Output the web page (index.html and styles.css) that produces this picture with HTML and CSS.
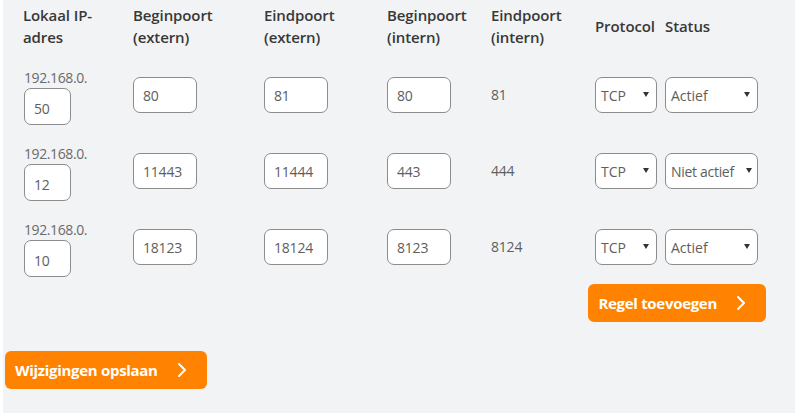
FILE: index.html
```html
<!DOCTYPE html>
<html lang="nl">
<head>
<meta charset="utf-8">
<title>Port forwarding</title>
<link rel="stylesheet" href="styles.css">
</head>
<body>
<div class="panel">
  <div class="rules">
    <div class="th">Lokaal IP-<br>adres</div>
    <div class="th">Beginpoort<br>(extern)</div>
    <div class="th">Eindpoort<br>(extern)</div>
    <div class="th">Beginpoort<br>(intern)</div>
    <div class="th">Eindpoort<br>(intern)</div>
    <div class="th">Protocol</div>
    <div class="th">Status</div>

    <div class="ip"><span class="prefix">192.168.0.</span><span class="field field-ip">50</span></div>
    <div class="cell"><span class="field">80</span></div>
    <div class="cell"><span class="field">81</span></div>
    <div class="cell"><span class="field">80</span></div>
    <div class="cell value">81</div>
    <div class="cell"><span class="select select-proto"><span>TCP</span><span class="arrow"></span></span></div>
    <div class="cell"><span class="select select-status"><span>Actief</span><span class="arrow"></span></span></div>

    <div class="ip"><span class="prefix">192.168.0.</span><span class="field field-ip">12</span></div>
    <div class="cell"><span class="field">11443</span></div>
    <div class="cell"><span class="field">11444</span></div>
    <div class="cell"><span class="field">443</span></div>
    <div class="cell value">444</div>
    <div class="cell"><span class="select select-proto"><span>TCP</span><span class="arrow"></span></span></div>
    <div class="cell"><span class="select select-status tight"><span>Niet actief</span><span class="arrow"></span></span></div>

    <div class="ip"><span class="prefix">192.168.0.</span><span class="field field-ip">10</span></div>
    <div class="cell"><span class="field">18123</span></div>
    <div class="cell"><span class="field">18124</span></div>
    <div class="cell"><span class="field">8123</span></div>
    <div class="cell value">8124</div>
    <div class="cell"><span class="select select-proto"><span>TCP</span><span class="arrow"></span></span></div>
    <div class="cell"><span class="select select-status"><span>Actief</span><span class="arrow"></span></span></div>
  </div>

  <div class="add-row">
    <button class="btn">Regel toevoegen<svg class="chev" width="10" height="16" viewBox="0 0 10 16"><polyline points="2,2 8,8 2,14" fill="none" stroke="#fff" stroke-width="2" stroke-linecap="round" stroke-linejoin="round"/></svg></button>
  </div>

  <div class="save-row">
    <button class="btn">Wijzigingen opslaan<svg class="chev" width="10" height="16" viewBox="0 0 10 16"><polyline points="2,2 8,8 2,14" fill="none" stroke="#fff" stroke-width="2" stroke-linecap="round" stroke-linejoin="round"/></svg></button>
  </div>
</div>
</body>
</html>
```
FILE: styles.css
```css
html, body {
  margin: 0;
  padding: 0;
  background: #ffffff;
}

body {
  font-family: "Open Sans", "Liberation Sans", sans-serif;
  color: #5e5e5e;
}

.panel {
  margin-left: 3px;
  width: 792px;
  height: 413px;
  background: #f2f3f5;
  box-sizing: border-box;
  padding-top: 4px;
}

.rules {
  display: grid;
  grid-template-columns: 110px 131px 123px 104px 104px 70px 100px;
  grid-template-rows: 44px repeat(3, 55px);
  row-gap: 21px;
  align-items: center;
  padding-left: 20px;
}

.th {
  font-size: 15px;
  line-height: 22px;
  font-weight: 600;
  color: #383838;
  letter-spacing: -0.1px;
}

.cell {
  padding-bottom: 4px;
}

.ip {
  display: flex;
  flex-direction: column;
  align-items: flex-start;
  padding-left: 1px;
}

.prefix {
  font-size: 14px;
  line-height: 18px;
  letter-spacing: -0.4px;
  color: #6a6a6a;
}

.field {
  display: flex;
  align-items: center;
  box-sizing: border-box;
  width: 64px;
  height: 36px;
  padding: 2px 0 0 9px;
  background: #fff;
  border: 1px solid #8c8c8c;
  border-radius: 7px;
  font-size: 14px;
  color: #5e5e5e;
  letter-spacing: -0.2px;
}

.field-ip {
  width: 47px;
  height: 37px;
  margin-top: 1px;
  padding-top: 5px;
}

.value {
  font-size: 14px;
  color: #5e5e5e;
  letter-spacing: -0.2px;
}

.select {
  display: flex;
  align-items: center;
  justify-content: space-between;
  box-sizing: border-box;
  height: 36px;
  padding: 2px 7px 0 5px;
  background: #fff;
  border: 1px solid #8c8c8c;
  border-radius: 7px;
  font-size: 14px;
  color: #5e5e5e;
}

.select-proto {
  width: 62px;
}

.select-status {
  width: 93px;
}

.select.tight {
  padding-right: 5px;
  letter-spacing: -0.3px;
}

.arrow {
  width: 0;
  height: 0;
  border-left: 3px solid transparent;
  border-right: 3px solid transparent;
  border-top: 5px solid #333;
  margin-bottom: 3px;
}

.add-row {
  display: flex;
  justify-content: flex-end;
  padding-right: 29px;
  margin-top: 8px;
}

.save-row {
  display: flex;
  padding-left: 2px;
  margin-top: 29px;
}

.btn {
  display: flex;
  align-items: center;
  height: 38px;
  margin: 0;
  padding: 0 20px 0 10px;
  border: none;
  border-radius: 6px;
  background: #ff8300;
  color: #fff;
  font-family: "Open Sans", "Liberation Sans", sans-serif;
  font-size: 15px;
  font-weight: 700;
  letter-spacing: -0.3px;
}

.chev {
  margin-left: 19px;
}
```
